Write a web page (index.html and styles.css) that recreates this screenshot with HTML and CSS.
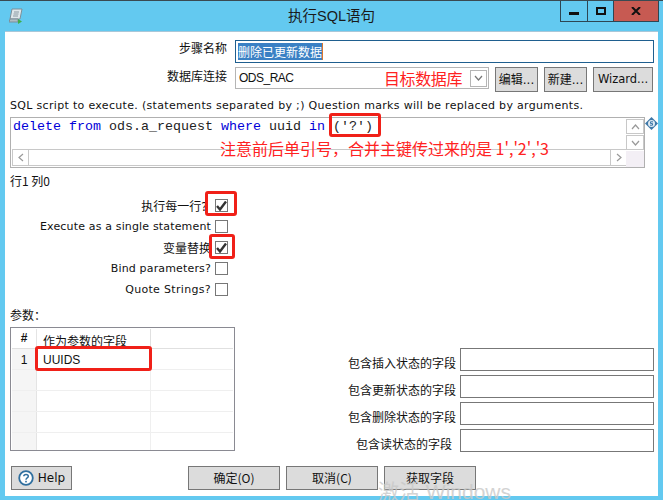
FILE: index.html
```html
<!DOCTYPE html>
<html lang="zh">
<head>
<meta charset="utf-8">
<title>执行SQL语句</title>
<link rel="stylesheet" href="styles.css">
</head>
<body>
<div class="window">
  <header class="titlebar">
    <svg class="app-icon" width="14" height="16" viewBox="0 0 14 16"><path d="M3 1h10l-2 10H1z" fill="#dfe6ea" stroke="#7d8f99"/><path d="M1 11h8v3H0z" fill="#aebcc4" stroke="#7d8f99"/><path d="M9 11l4 2.500L9 16z" fill="#3fae49"/><path d="M5 4h5M4.500 6h5M4 8h5" stroke="#8a9aa3"/></svg>
    <h1 class="title">执行SQL语句</h1>
    <div class="controls">
      <div class="ctl"><span class="min-glyph"></span></div>
      <div class="ctl ctl-max"><span class="max-glyph"></span></div>
      <div class="ctl ctl-close">
        <svg width="10" height="8" viewBox="0 0 10 8"><path d="M1 0l8 8M9 0L1 8" stroke="#111" stroke-width="2"/></svg>
      </div>
    </div>
  </header>
  <main class="content">
    <div class="row row-name">
      <label class="top-label">步骤名称</label>
      <div class="name-input"><span class="selected">删除已更新数据</span><span class="caret"></span></div>
    </div>
    <div class="row row-conn">
      <label class="top-label">数据库连接</label>
      <div class="combo">
        <span class="combo-text">ODS_RAC</span>
        <span class="combo-arrow"><svg width="9" height="6" viewBox="0 0 9 6"><path d="M1 1l3.500 4L8 1" fill="none" stroke="#777" stroke-width="1.200"/></svg></span>
      </div>
      <button class="btn btn-edit">编辑...</button>
      <button class="btn btn-edit">新建...</button>
      <button class="btn btn-wizard">Wizard...</button>
    </div>
    <p class="sql-label">SQL script to execute. (statements separated by ;) Question marks will be replaced by arguments.</p>
    <div class="sql-wrap">
      <div class="editor">
        <div class="editor-main">
          <code class="code"><span class="kw">delete from</span> ods.a_request <span class="kw">where</span> uuid <span class="kw">in</span> ('?')</code>
          <div class="hscroll">
            <span class="sb-btn"><svg width="6" height="9" viewBox="0 0 6 9"><path d="M5 1L1 4.500 5 8" fill="none" stroke="#999" stroke-width="1.200"/></svg></span>
            <span class="sb-track"></span>
            <span class="sb-btn"><svg width="6" height="9" viewBox="0 0 6 9"><path d="M1 1l4 3.500L1 8" fill="none" stroke="#999" stroke-width="1.200"/></svg></span>
          </div>
        </div>
        <div class="vscroll">
          <span class="sb-btn-v"><svg width="9" height="6" viewBox="0 0 9 6"><path d="M1 5l3.500-4L8 5" fill="none" stroke="#999" stroke-width="1.200"/></svg></span>
          <span class="sb-btn-v"><svg width="9" height="6" viewBox="0 0 9 6"><path d="M1 1l3.500 4L8 1" fill="none" stroke="#999" stroke-width="1.200"/></svg></span>
          <span class="corner"></span>
        </div>
      </div>
      <svg class="s-icon" width="13" height="13" viewBox="0 0 13 13"><path d="M6.500 0L13 6.500 6.500 13 0 6.500z" fill="#3f78a8"/><circle cx="6.500" cy="6.500" r="3.500" fill="#dfeaf2"/><path d="M8 4.800H5.500v1.700h2v1.700H5" fill="none" stroke="#3f78a8"/></svg>
    </div>
    <p class="pos">行1 列0</p>
    <div class="checks">
      <div class="check-row"><span class="cjk cjk-q">执行每一行?</span><span class="cb"><svg width="11" height="10" viewBox="0 0 11 10"><path d="M1 5l3 3.500 6-8" fill="none" stroke="#333" stroke-width="2.400"/></svg></span></div>
      <div class="check-row"><span>Execute as a single statement</span><span class="cb"></span></div>
      <div class="check-row"><span class="cjk">变量替换</span><span class="cb"><svg width="11" height="10" viewBox="0 0 11 10"><path d="M1 5l3 3.500 6-8" fill="none" stroke="#333" stroke-width="2.400"/></svg></span></div>
      <div class="check-row"><span>Bind parameters?</span><span class="cb"></span></div>
      <div class="check-row"><span class="quote">Quote Strings?</span><span class="cb"></span></div>
    </div>
    <p class="params-label">参数：</p>
    <div class="lower">
      <div class="table">
        <div class="t-row t-head"><span class="c-num">#</span><span class="c-field">作为参数的字段</span><span class="c-rest"></span></div>
        <div class="t-row"><span class="c-num">1</span><span class="c-field">UUIDS</span><span class="c-rest"></span></div>
        <div class="t-row"><span class="c-num"></span><span class="c-field"></span><span class="c-rest"></span></div>
        <div class="t-row"><span class="c-num"></span><span class="c-field"></span><span class="c-rest"></span></div>
        <div class="t-row"><span class="c-num"></span><span class="c-field"></span><span class="c-rest"></span></div>
        <div class="t-row t-last"><span class="c-num"></span><span class="c-field"></span><span class="c-rest"></span></div>
      </div>
      <div class="status-fields">
        <div class="field-row"><span>包含插入状态的字段</span><span class="field"></span></div>
        <div class="field-row"><span>包含更新状态的字段</span><span class="field"></span></div>
        <div class="field-row"><span>包含删除状态的字段</span><span class="field"></span></div>
        <div class="field-row field-read"><span>包含读状态的字段</span><span class="field"></span></div>
      </div>
    </div>
    <footer class="footer">
      <button class="btn btn-help"><svg width="16" height="16" viewBox="0 0 16 16"><circle cx="8" cy="8" r="6.800" fill="#fff" stroke="#2f6f9f" stroke-width="1.800"/><path d="M5.800 6.300C5.800 3.800 10.300 3.800 10.300 6.300 10.300 8 8 7.800 8 9.700" fill="none" stroke="#2f6f9f" stroke-width="1.500"/><rect x="7.200" y="10.800" width="1.600" height="1.600" fill="#2f6f9f"/></svg>Help</button>
      <div class="actions">
        <button class="btn btn-action">确定(O)</button>
        <button class="btn btn-action">取消(C)</button>
        <button class="btn btn-action">获取字段</button>
      </div>
    </footer>
  </main>
  <span class="note note-db">目标数据库</span>
  <span class="note note-quote">注意前后单引号，合并主键传过来的是 1','2','3</span>
  <span class="mark mark-sql"></span>
  <span class="mark mark-c1"></span>
  <span class="mark mark-c2"></span>
  <span class="mark mark-uuid"></span>
  <span class="watermark">激活 Windows</span>
</div>
</body>
</html>
```
FILE: styles.css
```css
* { box-sizing: border-box; }
html, body { margin: 0; padding: 0; }
body {
  width: 663px;
  height: 500px;
  overflow: hidden;
  font-family: "DejaVu Sans", "Noto Sans CJK SC", sans-serif;
  font-size: 12px;
  color: #111;
}
.window {
  position: relative;
  width: 663px;
  height: 500px;
  overflow: hidden;
  background: #63c9f0;
  border-top: 1px solid #3a4a52;
  display: flex;
  flex-direction: column;
}
.titlebar {
  position: relative;
  height: 30px;
  flex: none;
  padding-left: 9px;
  display: flex;
  align-items: center;
}
.app-icon { margin-top: -1px; }
.title {
  position: absolute;
  left: 0;
  right: 0;
  top: 4px;
  margin: 0;
  text-align: center;
  font: 400 14.500px/22px "Liberation Sans", "Noto Sans CJK SC", sans-serif;
  color: #1a1a1a;
}
.controls {
  position: absolute;
  top: 0;
  right: 4px;
  display: flex;
  height: 21px;
  border: 1px solid #2d4653;
  border-top: 0;
}
.ctl {
  width: 27px;
  display: flex;
  align-items: center;
  justify-content: center;
  border-right: 1px solid #2d4653;
}
.ctl-max { width: 26px; }
.ctl-close { width: 44px; border-right: 0; background: #c75a52; }
.min-glyph { width: 10px; height: 3px; background: #111; margin-top: 5px; }
.max-glyph { width: 10px; height: 8px; border: 2px solid #111; margin-top: -1px; }

.content {
  position: relative;
  flex: none;
  margin: 0 5px;
  height: 465px;
  background: #fff;
  border-top: 1px solid #a9c7d8;
  padding: 8px 4px 0 5px;
  display: flex;
  flex-direction: column;
}
.row { display: flex; align-items: flex-start; }
.top-label {
  width: 217px;
  text-align: right;
  font-family: "Noto Sans CJK SC", sans-serif;
  line-height: 16px;
  flex: none;
}
.row-name { height: 27px; }
.name-input {
  margin-left: 8px;
  width: 419px;
  height: 23px;
  border: 1px solid #1f5f8f;
  padding: 2px;
  display: flex;
  align-items: stretch;
  font-family: "Noto Sans CJK SC", sans-serif;
}
.selected { background: #3a80c4; color: #fff; line-height: 17px; }
.caret { width: 1px; background: #d9772b; }
.row-conn { height: 30px; }
.row-conn .top-label { margin-top: 1px; }
.combo {
  margin-left: 8px;
  width: 254px;
  height: 22px;
  border: 1px solid #b5b5b5;
  display: flex;
  align-items: center;
  justify-content: space-between;
  padding: 0 1px 0 3px;
  font-family: "Liberation Sans", sans-serif;
  font-size: 12px;
}
.combo-text { letter-spacing: -0.500px; }
.combo-arrow {
  width: 17px;
  height: 17px;
  border: 1px solid #b5b5b5;
  display: flex;
  align-items: center;
  justify-content: center;
}
.btn {
  margin: 0;
  padding: 0;
  height: 25px;
  background: #dcdcdc;
  border: 1px solid #777;
  color: #111;
  font: 12px/1 "DejaVu Sans", "Noto Sans CJK SC", sans-serif;
  display: flex;
  align-items: center;
  justify-content: center;
}
.btn-edit { width: 43px; margin-left: 6px; flex: none; }
.btn-wizard { width: 60px; margin-left: 6px; flex: none; font-size: 11.500px; }
.sql-label {
  margin: 0;
  height: 20px;
  line-height: 17px;
  font-family: "DejaVu Sans", sans-serif;
  font-size: 11px;
  letter-spacing: 0.320px;
  white-space: nowrap;
}
.sql-wrap { position: relative; }
.s-icon { position: absolute; right: -4px; top: 0; }
.editor {
  width: 635px;
  height: 51px;
  border: 1px solid #b0b0b0;
  display: flex;
}
.editor-main { flex: 1; min-width: 0; display: flex; flex-direction: column; justify-content: space-between; }
.code {
  display: block;
  font: 13.330px/16px "Liberation Mono", monospace;
  padding: 1px 0 0 2px;
  white-space: pre;
  color: #222;
}
.kw { color: #0000d8; }
.hscroll {
  height: 17px;
  margin: 0 0 1px 1px;
  border: 1px solid #c8c8c8;
  border-right: 0;
  display: flex;
  background: #fff;
}
.sb-btn {
  width: 16px;
  display: flex;
  align-items: center;
  justify-content: center;
  border-right: 1px solid #c8c8c8;
}
.sb-btn:last-child { border-left: 1px solid #c8c8c8; border-right: 0; }
.sb-track { flex: 1; }
.vscroll { width: 18px; flex: none; display: flex; flex-direction: column; padding-top: 1px; background: #fff; }
.sb-btn-v {
  height: 15px;
  margin-bottom: 1px;
  border: 1px solid #c8c8c8;
  display: flex;
  align-items: center;
  justify-content: center;
}
.corner { flex: 1; background: #f3eff5; }
.pos {
  margin: 5px 0 0 0;
  height: 16px;
  line-height: 16px;
  font-family: "Noto Sans CJK SC", sans-serif;
}
.checks { margin-top: 6px; width: 218px; display: flex; flex-direction: column; }
.check-row {
  height: 21px;
  display: flex;
  justify-content: flex-end;
  align-items: center;
  gap: 4px;
  font-size: 11px;
  letter-spacing: 0.160px;
  white-space: nowrap;
}
.quote { letter-spacing: 0.320px; }
.cjk { font-family: "Noto Sans CJK SC", sans-serif; font-size: 12px; letter-spacing: 0; }
.cjk-q { padding-right: 4px; }
.cb {
  width: 13px;
  height: 13px;
  flex: none;
  border: 1px solid #777;
  display: flex;
  align-items: center;
  justify-content: center;
  background: #fff;
}
.params-label {
  margin: 7px 0 0 0;
  height: 20px;
  line-height: 16px;
  font-family: "Noto Sans CJK SC", sans-serif;
}
.lower { display: flex; align-items: flex-start; justify-content: space-between; }
.table {
  width: 225px;
  height: 124px;
  border: 1px solid #8a8a92;
  padding: 1px;
  display: flex;
  flex-direction: column;
  overflow: hidden;
}
.t-row { display: flex; height: 21px; flex: none; border-bottom: 1px solid #efefef; }
.t-head { height: 20px; border-bottom: 1px solid #e0e0e0; }
.t-last { border-bottom: 0; }
.c-num {
  width: 25px;
  flex: none;
  background: #f5f5f5;
  border-right: 1px solid #e4e4e4;
  text-align: center;
  line-height: 23px;
  font-family: "Liberation Sans", sans-serif;
}
.t-head .c-num { background: #fff; font-weight: 700; line-height: 18px; }
.c-field {
  width: 114px;
  flex: none;
  border-right: 1px solid #efefef;
  padding-left: 6px;
  line-height: 23px;
  font-size: 12px;
  font-family: "Liberation Sans", "Noto Sans CJK SC", sans-serif;
}
.t-head .c-field { font-family: "Noto Sans CJK SC", sans-serif; line-height: 24px; border-right-color: #e0e0e0; overflow: hidden; }
.c-rest { flex: 1; }
.status-fields { display: flex; flex-direction: column; gap: 4px; margin-top: 21px; }
.field-row { display: flex; align-items: center; justify-content: flex-end; gap: 4px; font-family: "Noto Sans CJK SC", sans-serif; padding-top: 2px; }
.field-row > span:first-child { position: relative; top: 2px; }
.field-read { gap: 8px; }
.field { width: 194px; height: 23px; border: 1px solid #777; background: #fff; margin-top: -2px; }
.footer { margin-top: 14px; display: flex; padding-left: 1px; }
.btn-help { width: 61px; height: 24px; gap: 4px; font-size: 12px; }
.actions { margin-left: 116px; display: flex; gap: 6px; }
.btn-action { width: 92px; height: 24px; font-family: "Noto Sans CJK SC", sans-serif; }

.note {
  position: absolute;
  color: #f22;
  font-family: "Noto Sans CJK SC", sans-serif;
  white-space: nowrap;
}
.note-db { left: 384px; top: 67px; font-size: 16px; line-height: 20px; letter-spacing: -0.400px; }
.note-quote { left: 220px; top: 137px; font-size: 16px; line-height: 20px; }
.mark {
  position: absolute;
  border: 3px solid #f02018;
  border-radius: 3px;
}
.mark-sql { left: 329px; top: 112px; width: 52px; height: 24px; }
.mark-c1 { left: 205px; top: 190px; width: 32px; height: 25px; }
.mark-c2 { left: 209px; top: 233px; width: 26px; height: 25px; }
.mark-uuid { left: 35px; top: 345px; width: 117px; height: 25px; }
.watermark {
  position: absolute;
  left: 378px;
  top: 480px;
  font: 21px/22px "Liberation Sans", "Noto Sans CJK SC", sans-serif;
  color: #c9c9c9;
  opacity: 0.800;
  white-space: nowrap;
}
```
